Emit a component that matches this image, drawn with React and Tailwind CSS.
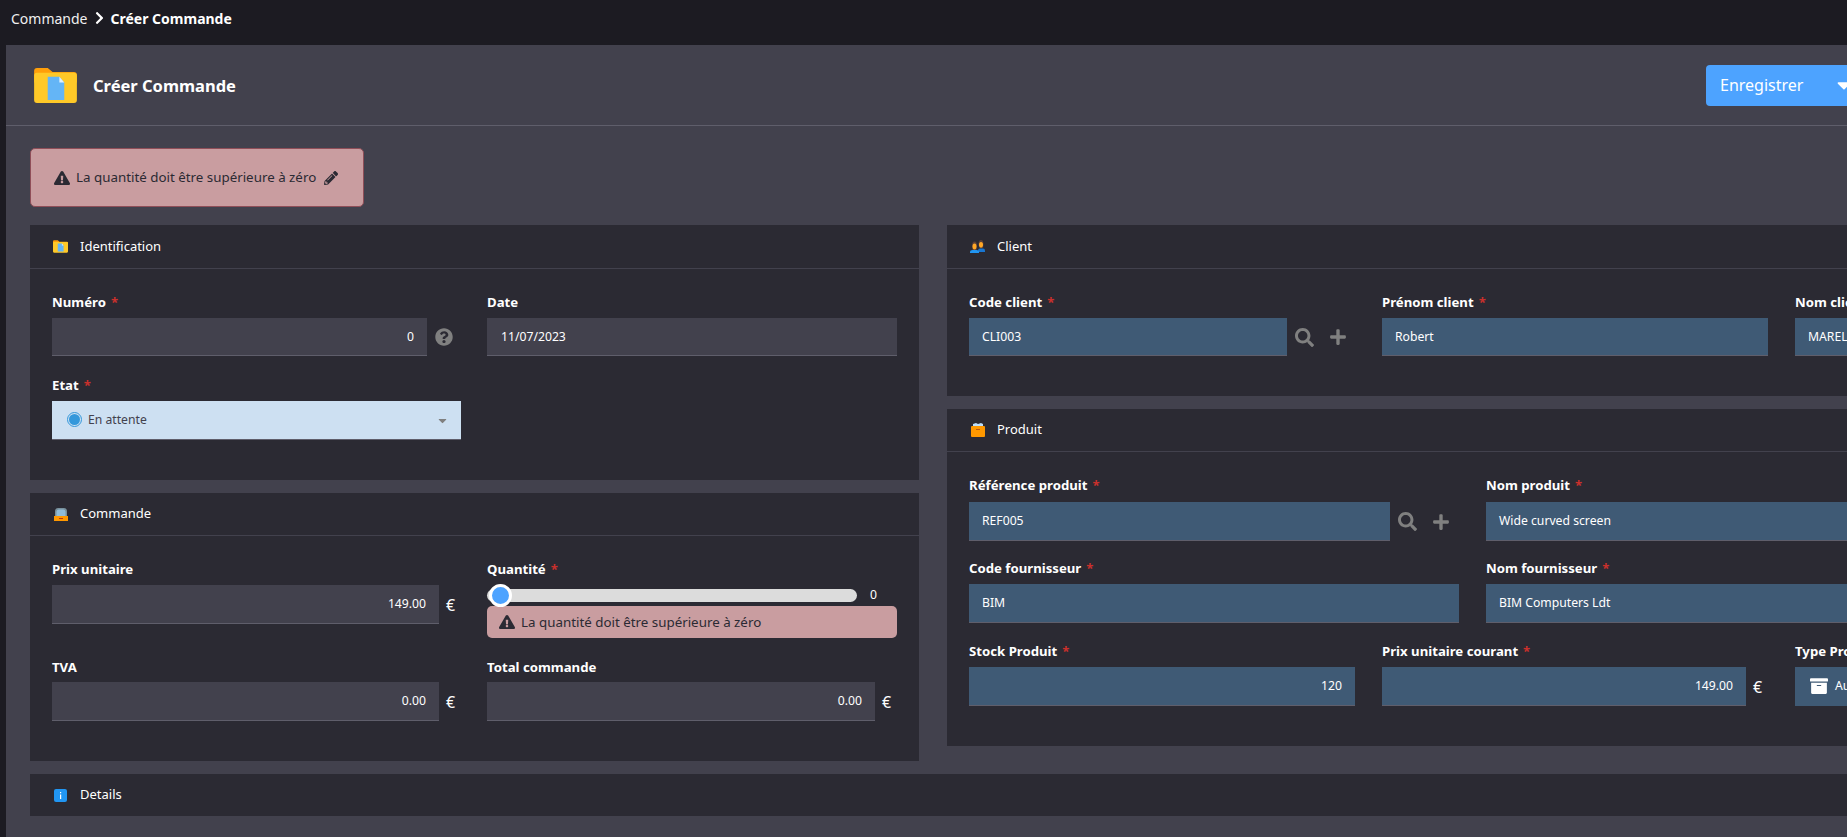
import {
  FaArchive,
  FaCaretDown,
  FaChevronRight,
  FaExclamationTriangle,
  FaPencilAlt,
  FaPlus,
  FaQuestionCircle,
  FaSearch,
} from "react-icons/fa";

// Coloured section icons
function FolderIcon({ className }) {
  return (
    <svg viewBox="0 0 44 36" className={className}>
      <path d="M3 0h11l5 4h22a3 3 0 0 1 3 3v8H0V3a3 3 0 0 1 3-3z" fill="#ff9f0a" />
      <path d="M3 5h38a3 3 0 0 1 3 3v25a3 3 0 0 1-3 3H3a3 3 0 0 1-3-3V8a3 3 0 0 1 3-3z" fill="#ffc928" />
      <path d="M14 9h12l5 6v18H14z" fill="#64b5f6" />
      <path d="M26 9l5 6h-5z" fill="#e3f2fd" />
    </svg>
  );
}

function ClientIcon() {
  return (
    <svg viewBox="0 0 15 13" className="w-[15px] h-[13px] shrink-0">
      <path d="M8 12v-1.500Q8 8.500 10 8.500h3q2 0 2 2V12z" fill="#1976d2" />
      <path d="M8.500 5Q8.500 0 11 0t2.500 5l-.5 3h-3.500z" fill="#5d4037" />
      <ellipse cx="11" cy="4.800" rx="2" ry="2.800" fill="#ffa726" />
      <path d="M0 13v-1.500Q0 10 2.500 10h4Q9 10 9 11.500V13z" fill="#2196f3" />
      <path d="M2 6Q2 1.500 4.500 1.500T7 6l-.5 4h-4z" fill="#5d4037" />
      <ellipse cx="4.500" cy="6.500" rx="2" ry="3" fill="#ffa726" />
    </svg>
  );
}

function BoxIcon() {
  return (
    <svg viewBox="0 0 14 14" className="w-[14px] h-[14px]">
      <path d="M2 1l3-1 2 1 3-1 2 1v4H2z" fill="#bbdefb" />
      <path d="M1 3h12a1 1 0 0 1 1 1v9a1 1 0 0 1-1 1H1a1 1 0 0 1-1-1V4a1 1 0 0 1 1-1z" fill="#ff9800" />
      <path d="M5 6h4v1H5z" fill="#bf5a0c" />
    </svg>
  );
}

function DrawerIcon() {
  return (
    <svg viewBox="0 0 14 13" className="w-[14px] h-[13px]">
      <path d="M1 8V3.500Q1 0 4 0h6q3 0 3 3.500V8z" fill="#78909c" />
      <path d="M2.500 8V4Q2.500 1.500 5 1.500h4q2.500 0 2.500 2.500v4z" fill="#90bcd8" />
      <path d="M0 8h14v5H0z" fill="#ff9800" />
      <path d="M5 10h4v1H5z" fill="#bf360c" />
    </svg>
  );
}

function InfoIcon() {
  return (
    <svg viewBox="0 0 13 13" className="w-[13px] h-[13px]">
      <rect width="13" height="13" rx="2" fill="#2196f3" />
      <path d="M6 3h1.200v1.300H6zM6 5.500h1.200V10H6z" fill="#fff" />
    </svg>
  );
}

function Panel({ icon, title, first, children }) {
  return (
    <section className="bg-[#2b2a33]">
      <div
        className={`flex items-center pl-[23px] border-b border-[#42414d] ${
          first ? "h-[44px]" : "h-[43px]"
        }`}
      >
        <span className="w-[15px] flex justify-center">{icon}</span>
        <span className="ml-[12px] text-[13px]">{title}</span>
      </div>
      {children}
    </section>
  );
}

function Label({ children, required, gap = "mb-[6px]" }) {
  return (
    <label className={`block h-[20px] leading-[20px] text-[13.2px] font-bold ${gap}`}>
      {children}
      {required && <span className="ml-[5px] text-[#c9302c]">*</span>}
    </label>
  );
}

function Input({ value, right, blue, height = "h-[39px]", className = "" }) {
  return (
    <div
      className={`flex items-center pt-[1px] px-[13px] text-[12.2px] border-b border-[#5f5e6b] ${height} ${
        blue ? "bg-[#3f5a75]" : "bg-[#42414d]"
      } ${right ? "justify-end" : ""} ${className}`}
    >
      {value}
    </div>
  );
}

function Euro() {
  return <span className="w-[22px] h-[39px] shrink-0 pl-[7px] text-[16px] leading-[41px]">€</span>;
}

function LookupButtons({ width = "w-[68px]" }) {
  return (
    <div className={`flex items-center shrink-0 pl-[8px] gap-[15px] text-[#808080] ${width}`}>
      <FaSearch className="w-[19px] h-[19px]" />
      <FaPlus className="w-[18px] h-[18px]" />
    </div>
  );
}

export default function App() {
  return (
    <div className="h-[837px] overflow-hidden bg-[#1c1b22] text-white font-['Noto_Sans','Open_Sans',sans-serif]">
      {/* Breadcrumb */}
      <div className="h-[45px] pb-[9px] pl-[11px] flex items-center text-[14px]">
        <span className="text-[#f0f0f0]">Commande</span>
        <FaChevronRight className="w-[9px] h-[14px] mx-[7px]" />
        <span className="font-bold">Créer Commande</span>
      </div>

      <main className="ml-[6px] w-[2230px] h-[792px] bg-[#42414d]">
        {/* Page title */}
        <header className="h-[81px] border-b border-[#5f5e6b]">
          <div className="w-[1860px] h-[80px] pl-[28px] flex items-center justify-between">
            <div className="flex items-center">
              <FolderIcon className="w-[43px] h-[35px] mt-[1px]" />
              <h1 className="ml-[16px] mt-[3px] text-[16.5px] font-bold">Créer Commande</h1>
            </div>
            <button className="w-[160px] h-[41px] pl-[14px] flex items-center shrink-0 rounded-[4px] bg-[#4da3ff] text-[16px]">
              Enregistrer
              <FaCaretDown className="ml-[30px] w-[22px] h-[22px]" />
            </button>
          </div>
        </header>

        <div className="px-[24px] pt-[22px]">
          {/* Global error */}
          <div className="w-[334px] h-[59px] pl-[23px] flex items-center rounded-[5px] border border-[#8f4e58] bg-[#c99da0] text-[#2b2a33] text-[13.35px]">
            <FaExclamationTriangle className="w-[16px] h-[16px] shrink-0" />
            <span className="ml-[6px] whitespace-nowrap">La quantité doit être supérieure à zéro</span>
            <FaPencilAlt className="ml-[8px] w-[14px] h-[14px] shrink-0" />
          </div>

          <div className="mt-[18px] grid grid-cols-[889px_1257px] gap-x-[28px] items-start">
            {/* Left column */}
            <div className="flex flex-col gap-[13px]">
              <Panel first icon={<FolderIcon className="w-[15px] h-[13px]" />} title="Identification">
                <div className="px-[22px] pt-[23px] pb-[40px] grid grid-cols-[409px_410px] gap-x-[26px] gap-y-[19px]">
                  <div>
                    <Label required>Numéro</Label>
                    <div className="flex items-center">
                      <Input right value="0" height="h-[38px]" className="w-[375px]" />
                      <FaQuestionCircle className="ml-[8px] w-[18px] h-[18px] text-[#808080]" />
                    </div>
                  </div>
                  <div>
                    <Label>Date</Label>
                    <Input value="11/07/2023" height="h-[38px]" className="pl-[14px]" />
                  </div>
                  <div>
                    <Label required>Etat</Label>
                    <div className="h-[39px] pl-[15px] pr-[12px] flex items-center justify-between bg-[#cde0f2] border-b border-[#5f5e6b] text-[#42414d] text-[12.2px]">
                      <span className="flex items-center gap-[6px]">
                        <span className="w-[15px] h-[15px] rounded-full border border-[#3498db] flex items-center justify-center">
                          <span className="w-[11px] h-[11px] rounded-full bg-[#3498db]" />
                        </span>
                        En attente
                      </span>
                      <FaCaretDown className="w-[13px] h-[13px] text-[#808080]" />
                    </div>
                  </div>
                </div>
              </Panel>

              <Panel icon={<DrawerIcon />} title="Commande">
                <div className="px-[22px] pt-[23px] pb-[40px] grid grid-cols-[409px_410px] gap-x-[26px] gap-y-[19px]">
                  <div>
                    <Label>Prix unitaire</Label>
                    <div className="flex">
                      <Input right value="149.00" className="w-[387px]" />
                      <Euro />
                    </div>
                  </div>
                  <div>
                    <Label required gap="mb-[10px]">Quantité</Label>
                    <div className="flex items-center h-[13px]">
                      <div className="relative w-[370px] h-[13px] rounded-full bg-[#dcdcdc]">
                        <span className="absolute left-[2px] top-[-5px] w-[23px] h-[23px] rounded-full bg-[#4da3ff] border-[3px] border-white" />
                      </div>
                      <span className="ml-[13px] text-[12.2px]">0</span>
                    </div>
                    <div className="mt-[4px] h-[32px] pl-[12px] flex items-center rounded-[5px] bg-[#c99da0] text-[#2b2a33] text-[13.35px]">
                      <FaExclamationTriangle className="w-[16px] h-[16px]" />
                      <span className="ml-[6px]">La quantité doit être supérieure à zéro</span>
                    </div>
                  </div>
                  <div>
                    <Label gap="mb-[5px]">TVA</Label>
                    <div className="flex">
                      <Input right value="0.00" className="w-[387px]" />
                      <Euro />
                    </div>
                  </div>
                  <div>
                    <Label gap="mb-[5px]">Total commande</Label>
                    <div className="flex">
                      <Input right value="0.00" className="w-[388px]" />
                      <Euro />
                    </div>
                  </div>
                </div>
              </Panel>
            </div>

            {/* Right column */}
            <div className="flex flex-col gap-[13px]">
              <Panel first icon={<ClientIcon />} title="Client">
                <div className="px-[22px] pt-[23px] pb-[40px] grid grid-cols-[386px_386px_386px] gap-x-[27px]">
                  <div>
                    <Label required>Code client</Label>
                    <div className="flex">
                      <Input blue value="CLI003" height="h-[38px]" className="flex-1" />
                      <LookupButtons />
                    </div>
                  </div>
                  <div>
                    <Label required>Prénom client</Label>
                    <Input blue value="Robert" height="h-[38px]" />
                  </div>
                  <div>
                    <Label required>Nom client</Label>
                    <Input blue value="MAREL" height="h-[38px]" />
                  </div>
                </div>
              </Panel>

              <Panel icon={<BoxIcon />} title="Produit">
                <div className="px-[22px] pt-[23px] pb-[40px] flex flex-col gap-y-[17px]">
                  <div className="grid grid-cols-[490px_1fr] gap-x-[27px]">
                    <div>
                      <Label required gap="mb-[7px]">Référence produit</Label>
                      <div className="flex">
                        <Input blue value="REF005" className="flex-1" />
                        <LookupButtons width="w-[69px]" />
                      </div>
                    </div>
                    <div>
                      <Label required gap="mb-[7px]">Nom produit</Label>
                      <Input blue value="Wide curved screen" />
                    </div>
                  </div>
                  <div className="grid grid-cols-[490px_1fr] gap-x-[27px]">
                    <div>
                      <Label required>Code fournisseur</Label>
                      <Input blue value="BIM" />
                    </div>
                    <div>
                      <Label required>Nom fournisseur</Label>
                      <Input blue value="BIM Computers Ldt" />
                    </div>
                  </div>
                  <div className="mt-[1px] grid grid-cols-[386px_386px_386px] gap-x-[27px]">
                    <div>
                      <Label required>Stock Produit</Label>
                      <Input blue right value="120" />
                    </div>
                    <div>
                      <Label required>Prix unitaire courant</Label>
                      <div className="flex">
                        <Input blue right value="149.00" className="flex-1" />
                        <Euro />
                      </div>
                    </div>
                    <div>
                      <Label required>Type Produit</Label>
                      <div className="h-[39px] pb-[1px] pl-[15px] flex items-center gap-[7px] bg-[#3f5a75] text-[12.2px]">
                        <FaArchive className="w-[18px] h-[18px]" />
                        Autre
                      </div>
                    </div>
                  </div>
                </div>
              </Panel>
            </div>
          </div>

          {/* Details */}
          <div className="mt-[13px] h-[42px] pl-[23px] flex items-center bg-[#2b2a33]">
            <span className="w-[15px] flex justify-center">
              <InfoIcon />
            </span>
            <span className="ml-[12px] text-[13px]">Details</span>
          </div>
        </div>
      </main>
    </div>
  );
}
